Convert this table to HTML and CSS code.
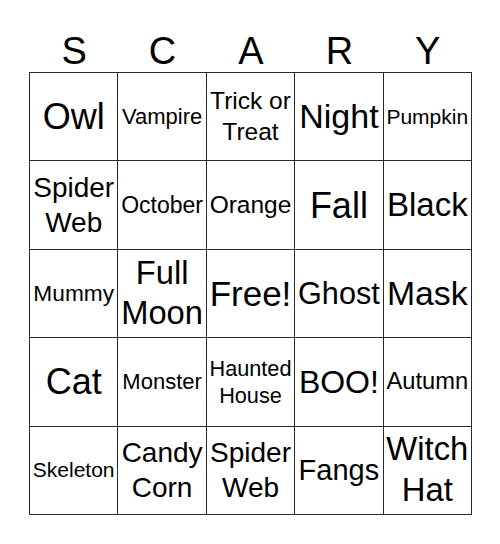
FILE: index.html
```html
<!DOCTYPE html>
<html>
<head>
<meta charset="utf-8">
<link rel="stylesheet" href="styles.css">
</head>
<body>
<div class="card">
  <div class="head">
    <span>S</span><span>C</span><span>A</span><span>R</span><span>Y</span>
  </div>
  <div class="grid">
    <div class="cell f36">Owl</div>
    <div class="cell f22">Vampire</div>
    <div class="cell f245">Trick or Treat</div>
    <div class="cell f34">Night</div>
    <div class="cell f21">Pumpkin</div>

    <div class="cell f28">Spider Web</div>
    <div class="cell f23">October</div>
    <div class="cell f245">Orange</div>
    <div class="cell f36">Fall</div>
    <div class="cell f33">Black</div>

    <div class="cell f227">Mummy</div>
    <div class="cell f327">Full Moon</div>
    <div class="cell f35">Free!</div>
    <div class="cell f306">Ghost</div>
    <div class="cell f338">Mask</div>

    <div class="cell f36">Cat</div>
    <div class="cell f22">Monster</div>
    <div class="cell f217">Haunted House</div>
    <div class="cell f32">BOO!</div>
    <div class="cell f237">Autumn</div>

    <div class="cell f21">Skeleton</div>
    <div class="cell f28">Candy Corn</div>
    <div class="cell f28">Spider Web</div>
    <div class="cell f29">Fangs</div>
    <div class="cell f328">Witch Hat</div>
  </div>
</div>
</body>
</html>
```
FILE: styles.css
```css
html, body {
  margin: 0;
  padding: 0;
  background: #fff;
}
body {
  font-family: "Liberation Sans", Arial, sans-serif;
  color: #000;
  width: 500px;
  height: 544px;
}
.card {
  width: 443px;
  margin: 0 0 0 29px;
}
.head {
  display: grid;
  grid-template-columns: repeat(5, 1fr);
  height: 72px;
  align-items: end;
  box-sizing: border-box;
  padding: 0 0 2px 1px;
}
.head span {
  text-align: center;
  font-size: 38px;
  line-height: 38px;
}
.grid {
  display: grid;
  grid-template-columns: repeat(5, 1fr);
  grid-auto-rows: 88.4px;
  border-left: 1px solid #2a2a2a;
  border-top: 1px solid #2a2a2a;
  width: 442px;
}
.cell {
  border-right: 1px solid #2a2a2a;
  border-bottom: 1px solid #2a2a2a;
  display: flex;
  align-items: center;
  justify-content: center;
  text-align: center;
  padding: 0 2px;
  line-height: 1.25;
  overflow: hidden;
}
.f21 { font-size: 21px; }
.f217 { font-size: 21.7px; }
.f22 { font-size: 22px; }
.f227 { font-size: 22.7px; }
.f23 { font-size: 23px; }
.f237 { font-size: 23.7px; }
.f245 { font-size: 24.5px; }
.f28 { font-size: 28px; }
.f29 { font-size: 29px; }
.f306 { font-size: 30.6px; }
.f32 { font-size: 32px; }
.f327 { font-size: 32.7px; }
.f328 { font-size: 32.8px; }
.f33 { font-size: 33px; }
.f338 { font-size: 33.8px; }
.f34 { font-size: 34px; }
.f35 { font-size: 35px; }
.f36 { font-size: 36px; }
```
